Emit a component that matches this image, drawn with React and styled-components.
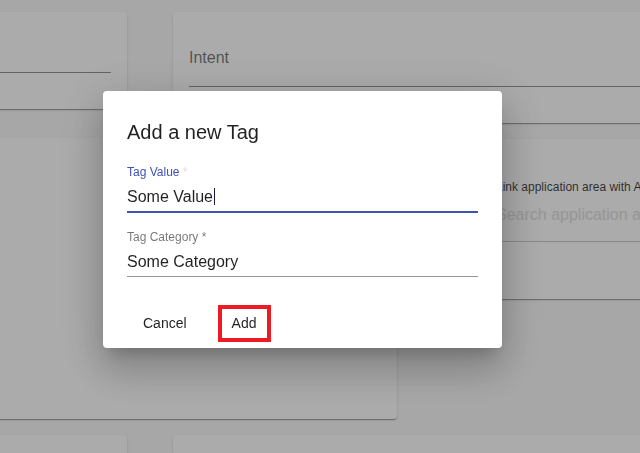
import styled, { createGlobalStyle } from "styled-components";

const GlobalStyle = createGlobalStyle`
  html, body {
    margin: 0;
    padding: 0;
    width: 640px;
    height: 453px;
    overflow: hidden;
    background: #fafafa;
    font-family: "Liberation Sans", Arial, sans-serif;
  }
`;

function App() {
  return (
    <>
      <GlobalStyle />
      <Page>
        {/* background form, dimmed by the dialog backdrop */}
        <Row $top={12}>
          <Card $width={157} $height={97} $pad="0 16px">
            <FieldLine $top={60} />
          </Card>
          <Card $grow $height={111} $pad="36px 0 0 16px" $gap={46}>
            <GhostLabel>Intent</GhostLabel>
            <FieldLine $top={19} />
          </Card>
        </Row>

        <Row $top={15}>
          <Card $width={427} $height={281} />
          <Card $grow $height={160} $pad="41px 0 0 16px" $gap={83} $shift={1}>
            <SmallText>Link application area with A</SmallText>
            <Placeholder>Search application a</Placeholder>
            <FieldLine $top={17} $light />
          </Card>
        </Row>

        <Row $top={16}>
          <Card $width={157} $height={60} />
          <Card $grow $height={60} $gap={46} />
        </Row>
      </Page>

      <Backdrop>
        <Dialog>
          <Title>Add a new Tag</Title>

          <Field>
            <Label $focused>
              Tag Value <Asterisk $focused>*</Asterisk>
            </Label>
            <InputBox $focused>
              Some Value<Caret />
            </InputBox>
          </Field>

          <Field>
            <Label>
              Tag Category <Asterisk>*</Asterisk>
            </Label>
            <InputBox>Some Category</InputBox>
          </Field>

          <Actions>
            <TextButton>Cancel</TextButton>
            <TextButton $highlight>Add</TextButton>
          </Actions>
        </Dialog>
      </Backdrop>
    </>
  );
}
export default App;

const Page = styled.div`
  margin-left: -30px;
  width: 700px;
  display: flex;
  flex-direction: column;
`;

const Row = styled.div`
  display: flex;
  align-items: flex-start;
  margin-top: ${(p) => p.$top}px;
`;

const Card = styled.div`
  box-sizing: border-box;
  flex: ${(p) => (p.$grow ? "1" : "none")};
  width: ${(p) => (p.$width ? `${p.$width}px` : "auto")};
  height: ${(p) => p.$height}px;
  margin-left: ${(p) => p.$gap || 0}px;
  margin-top: ${(p) => p.$shift || 0}px;
  padding: ${(p) => p.$pad || "0"};
  background: #ffffff;
  border-radius: 4px;
  box-shadow: 0 2px 1px -1px rgba(0, 0, 0, 0.2), 0 1px 1px 0 rgba(0, 0, 0, 0.14),
    0 1px 3px 0 rgba(0, 0, 0, 0.12);
  display: flex;
  flex-direction: column;
  overflow: hidden;
`;

const FieldLine = styled.div`
  margin-top: ${(p) => p.$top}px;
  height: 0;
  border-bottom: 1px solid ${(p) => (p.$light ? "rgba(0, 0, 0, 0.2)" : "rgba(0, 0, 0, 0.42)")};
`;

const GhostLabel = styled.div`
  font-size: 16px;
  line-height: 19px;
  color: rgba(0, 0, 0, 0.54);
`;

const SmallText = styled.div`
  font-size: 12px;
  line-height: 14px;
  color: rgba(0, 0, 0, 0.75);
  white-space: nowrap;
`;

const Placeholder = styled.div`
  margin-top: 11px;
  font-size: 16px;
  line-height: 19px;
  color: #e0e0e0;
  white-space: nowrap;
`;

const Backdrop = styled.div`
  position: fixed;
  inset: 0;
  background: rgba(0, 0, 0, 0.33);
  padding: 91px 0 0 103px;
  box-sizing: border-box;
  display: flex;
  align-items: flex-start;
`;

const Dialog = styled.div`
  width: 399px;
  box-sizing: border-box;
  padding: 25px 24px 6px;
  background: #ffffff;
  border-radius: 4px;
  box-shadow: 0 11px 15px -7px rgba(0, 0, 0, 0.2), 0 24px 38px 3px rgba(0, 0, 0, 0.14),
    0 9px 46px 8px rgba(0, 0, 0, 0.12);
  display: flex;
  flex-direction: column;
`;

const Title = styled.h2`
  margin: 0;
  font-size: 20px;
  line-height: 32px;
  font-weight: 400;
  color: rgba(0, 0, 0, 0.87);
`;

const Field = styled.div`
  margin-top: 18px;
  display: flex;
  flex-direction: column;
`;

const Label = styled.label`
  font-size: 12px;
  line-height: 12px;
  height: 12px;
  color: ${(p) => (p.$focused ? "#3f51b5" : "rgba(0, 0, 0, 0.54)")};
`;

const Asterisk = styled.span`
  color: ${(p) => (p.$focused ? "#dcdcec" : "inherit")};
`;

const InputBox = styled.div`
  margin-top: 9px;
  padding-bottom: 5px;
  font-size: 16px;
  line-height: 19px;
  color: rgba(0, 0, 0, 0.87);
  border-bottom: ${(p) => (p.$focused ? "2px solid #3f51b5" : "1px solid rgba(0, 0, 0, 0.42)")};
  display: flex;
  align-items: center;
`;

const Caret = styled.span`
  display: inline-block;
  width: 1px;
  height: 17px;
  margin-left: 1px;
  background: #1a1a40;
`;

const Actions = styled.div`
  margin-top: 28px;
  display: flex;
  align-items: center;
  gap: 15px;
`;

const TextButton = styled.button`
  font-family: "Liberation Sans", Arial, sans-serif;
  font-size: 14px;
  line-height: 29px;
  color: rgba(0, 0, 0, 0.87);
  background: transparent;
  cursor: pointer;
  box-sizing: border-box;
  height: 37px;
  padding: ${(p) => (p.$highlight ? "0 10px" : "0 12px")};
  border: 4px solid ${(p) => (p.$highlight ? "#ed1c24" : "transparent")};
  border-radius: 0;
`;
